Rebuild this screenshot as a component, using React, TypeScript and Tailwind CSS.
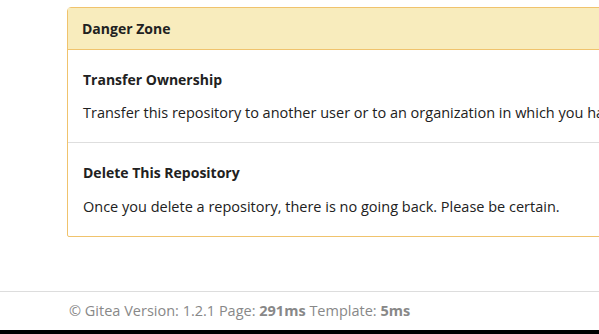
export default function App() {
  return (
    <div className="w-[599px] h-[334px] overflow-hidden bg-white flex flex-col font-['Open_Sans','Liberation_Sans',sans-serif] text-[14px] text-[#212121]">
      <div className="pt-[7px] pl-[67px] flex-1">
        <div className="w-[560px] border border-[#f0c36d] rounded-t-[4px] rounded-b-[2px]">
          <div className="h-[42px] flex items-center px-[14px] bg-[#f8ecbd] border-b border-[#f0c36d] font-bold">
            Danger Zone
          </div>
          <div className="px-[15px] pt-[20px] pb-[19px] border-b border-[#dedede]">
            <h5 className="font-bold leading-[20px] text-[14px]">Transfer Ownership</h5>
            <p className="mt-[13px] leading-[20px] text-[14.5px] whitespace-nowrap">
              Transfer this repository to another user or to an organization in which you have admin rights.
            </p>
          </div>
          <div className="px-[15px] pt-[20px] pb-[19px]">
            <h5 className="font-bold leading-[20px] text-[14px]">Delete This Repository</h5>
            <p className="mt-[14px] leading-[20px] text-[14.5px] whitespace-nowrap">
              Once you delete a repository, there is no going back. Please be certain.
            </p>
          </div>
        </div>
      </div>
      <div className="border-t border-[#dddddd] h-[39px] flex items-center pl-[69px] text-[14.5px] text-[#888888]">
        <span>
          © Gitea Version: 1.2.1 Page: <strong className="font-bold">291ms</strong> Template:{" "}
          <strong className="font-bold">5ms</strong>
        </span>
      </div>
      <div className="h-[4px] bg-black" />
    </div>
  );
}
